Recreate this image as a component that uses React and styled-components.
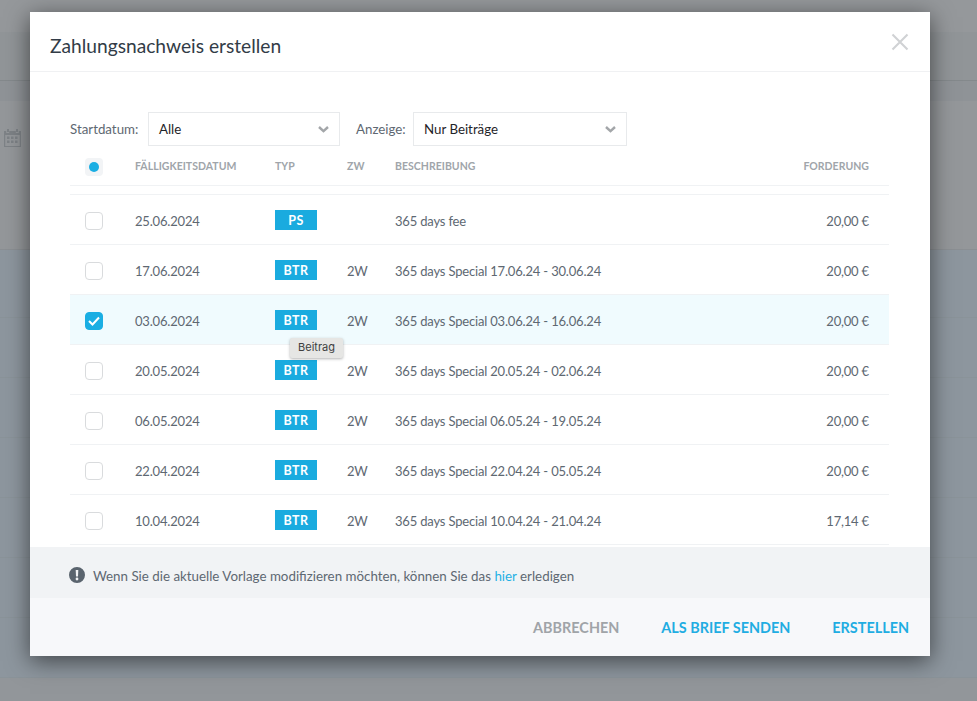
import React from 'react';
import styled, { createGlobalStyle } from 'styled-components';

const Global = createGlobalStyle`
  html, body { margin: 0; padding: 0; height: 100%; overflow: hidden; }
  body { font-family: "Lato", "Noto Sans", sans-serif; background: #ffffff; }
  * { box-sizing: border-box; }
`;

const Page = styled.div`
  width: 977px;
  height: 701px;
  display: flex;
  flex-direction: column;
  background: #92969a;
  overflow: hidden;
`;
const PageTop = styled.div`height: 32px; background: #95989b;`;
const PageHead = styled.div`height: 49px; background: #919598; border-bottom: 1px solid #84898c;`;
const PageTabs = styled.div`height: 20px; background: #8f9397;`;
const PageFilter = styled.div`
  height: 149px;
  padding: 28px 0 0 4px;
  background: #94979a;
  border-bottom: 1px solid #8b8f93;
  color: #7d8286;
`;
const PageList = styled.div`
  height: 428px;
  padding-top: 8px;
  background: #8d969e;
`;
const PageListRow = styled.div`
  height: 60px;
  border-bottom: 1px solid #8a9399;
`;
const PageFoot = styled.div`flex: 1; background: #92969a;`;

const Overlay = styled.div`
  position: absolute;
  inset: 0;
  padding: 12px 47px 45px 30px;
`;
const Dialog = styled.div`
  width: 900px;
  height: 644px;
  display: flex;
  flex-direction: column;
  background: #fff;
  box-shadow: 0 5px 22px rgba(0, 0, 0, 0.55);
`;
const Header = styled.header`
  height: 60px;
  flex: none;
  display: flex;
  align-items: center;
  justify-content: space-between;
  padding: 0 21px 0 20px;
  border-bottom: 1px solid #f0f1f3;
`;
const Title = styled.h1`
  margin: 8px 0 0;
  font-size: 19.2px;
  font-weight: 400;
  color: #323c47;
`;
const Close = styled.button`
  display: flex;
  padding: 0;
  border: 0;
  background: none;
  color: #d0d2d4;
`;
const Body = styled.div`
  height: 475px;
  flex: none;
  overflow: hidden;
  padding: 40px 41px 0 40px;
`;
const Filters = styled.div`
  display: flex;
  align-items: center;
  height: 34px;
  font-size: 13.3px;
`;
const FilterLabel = styled.label`
  width: ${p => p.$w}px;
  flex: none;
  color: #5e6872;
`;
const Select = styled.div`
  width: ${p => p.$w}px;
  height: 34px;
  margin-right: ${p => p.$mr || 0}px;
  display: flex;
  align-items: center;
  justify-content: space-between;
  padding: 0 10px 0 10px;
  background: #fff;
  border: 1px solid #e8eaec;
  color: #1f2429;
`;
const Row = styled.div`
  display: grid;
  grid-template-columns: 50px 140px 72px 48px 1fr auto;
  align-items: center;
  height: 50px;
  padding: 0 20px 0 15px;
  border-bottom: 1px solid #f0f2f4;
  font-size: 13px;
  letter-spacing: -0.18px;
  color: #5e6872;
  background: ${p => (p.$selected ? '#f0fbfe' : '#fff')};
`;
const HeadRow = styled(Row)`
  height: 40px;
  font-size: 10.5px;
  font-weight: 700;
  letter-spacing: 0.03px;
  color: #a0a5aa;
  margin-bottom: 8px;
`;
const List = styled.div`
  border-top: 1px solid #f0f2f4;
`;
const Cell = styled.span`
  padding-top: 2px;
  text-align: ${p => (p.$right ? 'right' : 'left')};
`;
const Check = styled.span`
  width: 18px;
  height: 18px;
  margin-top: 2px;
  display: flex;
  align-items: center;
  justify-content: center;
  border-radius: 4px;
  background: ${p => (p.$checked ? '#1aaee3' : '#fff')};
  border: 1px solid ${p => (p.$checked ? '#1aaee3' : '#d9dbdd')};
`;
const HeadCheck = styled.span`
  width: 18px;
  height: 18px;
  margin-top: 2px;
  display: flex;
  align-items: center;
  justify-content: center;
  border-radius: 4px;
  background: #f2f4f6;
`;
const Dot = styled.span`
  width: 10px;
  height: 10px;
  border-radius: 50%;
  background: #1aaee3;
`;
const TypeCell = styled.span`
  position: relative;
  display: block;
`;
const Badge = styled.span`
  display: block;
  width: 42px;
  height: 20px;
  line-height: 21px;
  text-align: center;
  background: #1aabdf;
  color: #fff;
  font-size: 12.5px;
  font-weight: 700;
  letter-spacing: 0.4px;
`;
const Tooltip = styled.span`
  position: absolute;
  left: 15px;
  top: 28px;
  z-index: 2;
  width: 53px;
  height: 20px;
  line-height: 19px;
  text-align: center;
  font-family: "Inter", sans-serif;
  font-size: 11px;
  letter-spacing: 0;
  color: #3f3f3f;
  background: #e6e6e4;
  border-radius: 2px;
  box-shadow: 0 1px 3px rgba(0, 0, 0, 0.3);
`;
const Notice = styled.div`
  height: 51px;
  flex: none;
  display: flex;
  align-items: center;
  gap: 8px;
  padding: 0 39px;
  background: #f1f3f5;
  font-size: 13.35px;
  color: #5e6872;
`;
const NoticeText = styled.span`
  padding-top: 6px;
`;
const NoticeIcon = styled.svg`
  width: 16px;
  height: 16px;
  margin-top: 4px;
  fill: #5a646e;
`;
const Link = styled.a`
  color: #1fb0e4;
`;
const Footer = styled.footer`
  flex: 1;
  display: flex;
  align-items: center;
  justify-content: flex-end;
  gap: 42px;
  padding: 0 21px 0 0;
  background: #f7f8fa;
`;
const Action = styled.button`
  padding: 0;
  border: 0;
  background: none;
  font: 700 14.4px "Lato", "Noto Sans", sans-serif;
  color: ${p => (p.$primary ? '#1fade2' : '#a0a4a8')};
`;

const rows = [
  ['25.06.2024', 'PS', '', '365 days fee', '20,00 €'],
  ['17.06.2024', 'BTR', '2W', '365 days Special 17.06.24 - 30.06.24', '20,00 €'],
  ['03.06.2024', 'BTR', '2W', '365 days Special 03.06.24 - 16.06.24', '20,00 €'],
  ['20.05.2024', 'BTR', '2W', '365 days Special 20.05.24 - 02.06.24', '20,00 €'],
  ['06.05.2024', 'BTR', '2W', '365 days Special 06.05.24 - 19.05.24', '20,00 €'],
  ['22.04.2024', 'BTR', '2W', '365 days Special 22.04.24 - 05.05.24', '20,00 €'],
  ['10.04.2024', 'BTR', '2W', '365 days Special 10.04.24 - 21.04.24', '17,14 €'],
];

const Chevron = () => (
  <svg width="11" height="7" viewBox="0 0 11 7" fill="none" stroke="#a3a6a9" strokeWidth="2.4">
    <path d="M1 1l4.5 4.2L10 1" />
  </svg>
);

const CalendarIcon = () => (
  <svg width="17" height="18" viewBox="0 0 17 18" fill="currentColor">
    <path d="M3 0h2v3H3zM12 0h2v3h-2zM0 2h2.2v2h3V2h6.6v2h3V2H17v16H0zM1.2 6v11h14.6V6zM3 7.5h2.5V10H3zM7 7.5h2.5V10H7zM11 7.5h2.5V10H11zM3 11.5h2.5V14H3zM7 11.5h2.5V14H7zM11 11.5h2.5V14H11z" fillRule="evenodd" />
  </svg>
);

export default function App() {
  return (
    <Page>
      <Global />
      <PageTop />
      <PageHead />
      <PageTabs />
      <PageFilter><CalendarIcon /></PageFilter>
      <PageList>
        {[0, 1, 2, 3, 4, 5, 6].map(n => <PageListRow key={n} />)}
      </PageList>
      <PageFoot />
      <Overlay>
        <Dialog>
          <Header>
            <Title>Zahlungsnachweis erstellen</Title>
            <Close aria-label="Schließen">
              <svg width="18" height="18" viewBox="0 0 18 18" fill="none" stroke="currentColor" strokeWidth="2.1">
                <path d="M1.5 1.5l15 15M16.5 1.5l-15 15" />
              </svg>
            </Close>
          </Header>
          <Body>
            <Filters>
              <FilterLabel $w={78}>Startdatum:</FilterLabel>
              <Select $w={192} $mr={16}>Alle<Chevron /></Select>
              <FilterLabel $w={57}>Anzeige:</FilterLabel>
              <Select $w={214}>Nur Beiträge<Chevron /></Select>
            </Filters>
            <HeadRow>
              <HeadCheck><Dot /></HeadCheck>
              <span>FÄLLIGKEITSDATUM</span>
              <span>TYP</span>
              <span>ZW</span>
              <span>BESCHREIBUNG</span>
              <span>FORDERUNG</span>
            </HeadRow>
            <List>
              {rows.map((r, i) => (
                <Row key={r[0]} $selected={i === 2}>
                  <Check $checked={i === 2}>
                    {i === 2 && (
                      <svg width="12" height="10" viewBox="0 0 12 10" fill="none" stroke="#fff" strokeWidth="2">
                        <path d="M1 5l3.5 3.5L11 1.5" />
                      </svg>
                    )}
                  </Check>
                  <Cell>{r[0]}</Cell>
                  <TypeCell>
                    <Badge>{r[1]}</Badge>
                    {i === 2 && <Tooltip>Beitrag</Tooltip>}
                  </TypeCell>
                  <Cell>{r[2]}</Cell>
                  <Cell>{r[3]}</Cell>
                  <Cell $right>{r[4]}</Cell>
                </Row>
              ))}
            </List>
          </Body>
          <Notice>
            <NoticeIcon viewBox="0 0 16 16">
              <path fillRule="evenodd" d="M8 0a8 8 0 1 1 0 16A8 8 0 0 1 8 0zM6.7 3l.3 6.5h2L9.3 3zM8 10.600a1.400 1.400 0 1 0 0 2.800 1.400 1.400 0 0 0 0-2.800z" />
            </NoticeIcon>
            <NoticeText>Wenn Sie die aktuelle Vorlage modifizieren möchten, können Sie das <Link>hier</Link> erledigen</NoticeText>
          </Notice>
          <Footer>
            <Action>ABBRECHEN</Action>
            <Action $primary>ALS BRIEF SENDEN</Action>
            <Action $primary>ERSTELLEN</Action>
          </Footer>
        </Dialog>
      </Overlay>
    </Page>
  );
}
